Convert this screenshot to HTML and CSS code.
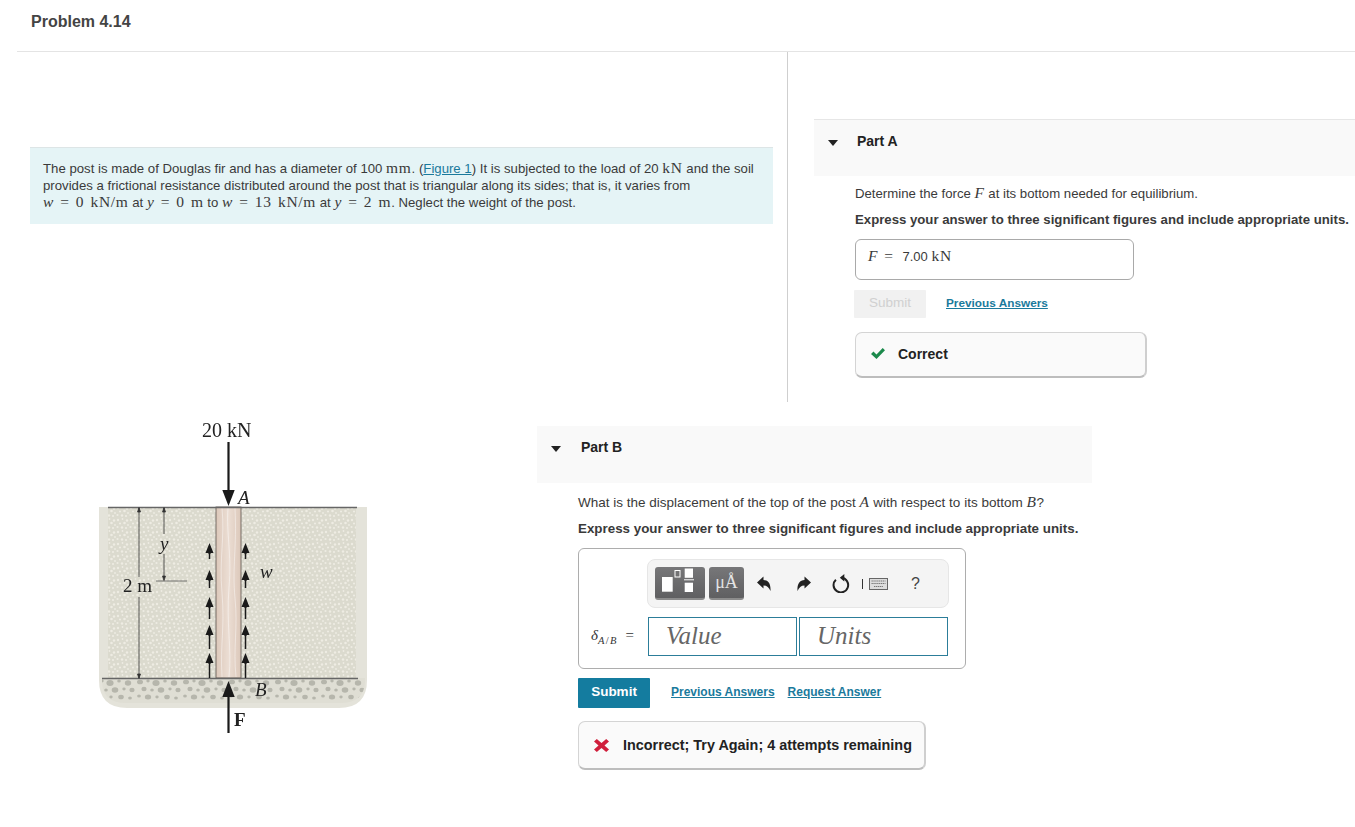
FILE: index.html
```html
<!DOCTYPE html>
<html lang="en">
<head>
<meta charset="utf-8">
<title>Problem 4.14</title>
<link rel="stylesheet" href="styles.css">
</head>
<body>
<header class="title"><h1>Problem 4.14</h1></header>
<section class="top">
  <div class="intro-col">
    <div class="intro">The post is made of Douglas fir and has a diameter of 100 <span class="m">mm</span>. (<a href="#">Figure 1</a>) It is subjected to the load of 20 <span class="m">kN</span> and the soil<br>provides a frictional resistance distributed around the post that is triangular along its sides; that is, it varies from<br><span class="m"><i>w</i> = 0 kN/m</span> at <span class="m"><i>y</i> = 0 m</span> to <span class="m"><i>w</i> = 13 kN/m</span> at <span class="m"><i>y</i> = 2 m</span>. Neglect the weight of the post.</div>
  </div>
  <div class="part part-a">
    <div class="part-head"><span class="caret"></span><h2>Part A</h2></div>
    <div class="part-body">
      <p class="q">Determine the force <span class="m"><i>F</i></span> at its bottom needed for equilibrium.</p>
      <p class="ins">Express your answer to three significant figures and include appropriate units.</p>
      <div class="done-input"><span class="m"><i>F</i> =</span> <span class="val">7.00</span> <span class="m">kN</span></div>
      <div class="actions">
        <button class="submit off">Submit</button>
        <a class="link" href="#">Previous Answers</a>
      </div>
      <div class="feedback ok">
        <svg class="fb-icon" width="16" height="13" viewBox="0 0 16 13"><path d="M1 7l2.500-2.500 3 3L12.700 1 15 3.300 6.500 12z" fill="#1c8a4c"/></svg>
        <span>Correct</span>
      </div>
    </div>
  </div>
</section>
<section class="bottom">
  <svg class="figure" width="290" height="330" viewBox="0 0 290 330">
    <defs>
      <pattern id="sand" width="13" height="12" patternUnits="userSpaceOnUse">
        <rect width="13" height="12" fill="#dbdace"/>
        <g fill="#eeece3">
          <circle cx="2" cy="2" r="1.200"/><circle cx="6.500" cy="1" r=".9"/><circle cx="11" cy="2.500" r="1.200"/>
          <circle cx="4" cy="5.500" r="1.100"/><circle cx="8.500" cy="5" r="1.300"/><circle cx="12" cy="7" r=".9"/>
          <circle cx="1.500" cy="9" r="1.100"/><circle cx="6" cy="9.500" r="1.200"/><circle cx="10" cy="10" r="1.100"/>
        </g>
      </pattern>
      <pattern id="gravel" width="46" height="24" patternUnits="userSpaceOnUse" patternTransform="translate(0 268)">
        <g fill="#b6b6ac">
          <ellipse cx="4" cy="4" rx="3" ry="2.300"/><ellipse cx="12" cy="3" rx="1.700" ry="1.400"/><ellipse cx="20" cy="5" rx="3.600" ry="3"/>
          <ellipse cx="29" cy="3" rx="1.800" ry="1.500"/><ellipse cx="38" cy="5" rx="3.200" ry="2.700"/><ellipse cx="8" cy="11" rx="2.600" ry="2.200"/>
          <ellipse cx="16" cy="12" rx="1.800" ry="1.500"/><ellipse cx="25" cy="12" rx="3.300" ry="2.800"/><ellipse cx="34" cy="11" rx="1.700" ry="1.400"/>
          <ellipse cx="42" cy="12" rx="2.600" ry="2.200"/><ellipse cx="3" cy="18" rx="1.900" ry="1.500"/><ellipse cx="12" cy="19" rx="3.200" ry="2.500"/>
          <ellipse cx="21" cy="19" rx="1.700" ry="1.400"/><ellipse cx="31" cy="19" rx="2.800" ry="2.300"/><ellipse cx="40" cy="20" rx="1.900" ry="1.500"/>
        </g>
      </pattern>
      <linearGradient id="wood" x1="0" x2="1" y1="0" y2="0">
        <stop offset="0" stop-color="#dcc8ba"/><stop offset=".5" stop-color="#ebddd3"/><stop offset="1" stop-color="#dcc8ba"/>
      </linearGradient>
      <g id="up"><path d="M0 0l4 10h-3v1h-2v-1h-3z" fill="#1a1a1a"/></g>
    </defs>
    <g class="art">
      <path d="M9 97H277V270Q277 298 249 298H37Q9 298 9 270Z" fill="#e4e3da"/>
      <rect x="18" y="98" width="248" height="170" fill="url(#sand)"/>
      <path d="M12 268H275V272Q274 293 250 293H36Q13 293 12 272Z" fill="#dfded4"/>
      <path d="M12 269H275V272Q274 293 250 293H36Q13 293 12 272Z" fill="url(#gravel)"/>
      <rect x="126" y="97" width="25" height="171" fill="url(#wood)" stroke="#6a625c" stroke-width=".9"/>
      <g fill="none" stroke="#fff" stroke-opacity=".55" stroke-width=".8">
        <path d="M132 98c3 30-3 50 0 85s-2 50 0 84"/>
        <path d="M138 98c-2 25 4 45 1 80s3 60 0 89"/>
        <path d="M145 98c2 40-3 60 0 90s-2 50 1 79"/>
      </g>
      <path d="M18 97.500H267M12 268.500H268" stroke="#666" stroke-width="1.300"/>
      <g stroke="#333" stroke-width=".8" fill="#333">
        <path d="M49 98V167M49 187V268" fill="none"/>
        <path d="M74 98V124M74 144V168" fill="none"/>
        <path d="M66 171H97" fill="none" stroke="#555"/>
        <path d="M47.500 102L49 97.500 50.500 102Z"/><path d="M47.500 264L49 268.500 50.500 264Z"/>
        <path d="M72.500 102L74 97.500 75.500 102Z"/><path d="M72.500 166L74 170.500 75.500 166Z"/>
      </g>
      <g stroke="#1a1a1a" stroke-width="1.500">
        <path d="M119.500 140V149M119.500 167V178M119.500 194V209M119.500 222V239M119.500 250V268"/>
        <path d="M155.500 140V149M155.500 167V178M155.500 194V209M155.500 222V239M155.500 250V268"/>
      </g>
      <use href="#up" x="119.500" y="133"/><use href="#up" x="119.500" y="160"/><use href="#up" x="119.500" y="187"/><use href="#up" x="119.500" y="215"/><use href="#up" x="119.500" y="243"/>
      <use href="#up" x="155.500" y="133"/><use href="#up" x="155.500" y="160"/><use href="#up" x="155.500" y="187"/><use href="#up" x="155.500" y="215"/><use href="#up" x="155.500" y="243"/>
      <path d="M138.500 32V82" stroke="#1a1a1a" stroke-width="2.200"/>
      <path d="M132.300 80H144.700L138.500 96Z" fill="#1a1a1a"/>
      <path d="M138.500 286V323" stroke="#1a1a1a" stroke-width="2.200"/>
      <path d="M132.300 287H144.700L138.500 271Z" fill="#1a1a1a"/>
    </g>
    <text class="fig-t big" x="112" y="27">20 kN</text>
    <text class="fig-t it" x="148" y="94">A</text>
    <text class="fig-t it" x="165" y="286">B</text>
    <text class="fig-t bold" x="144" y="316">F</text>
    <text class="fig-t it" x="170" y="168">w</text>
    <text class="fig-t it" x="70" y="140">y</text>
    <text class="fig-t" x="33" y="182">2 m</text>
  </svg>
  <div class="part part-b">
    <div class="part-head"><span class="caret"></span><h2>Part B</h2></div>
    <div class="part-body">
      <p class="q">What is the displacement of the top of the post <span class="m"><i>A</i></span> with respect to its bottom <span class="m"><i>B</i></span>?</p>
      <p class="ins">Express your answer to three significant figures and include appropriate units.</p>
      <div class="answer">
        <div class="toolbar">
          <span class="tool tpl">
            <svg width="50" height="33" viewBox="0 0 50 33"><g fill="#fff"><rect x="7" y="11" width="10.700" height="14.700"/><rect x="29.700" y="2.500" width="8.300" height="9.300"/><rect x="29.700" y="16.700" width="8.300" height="9.300"/><rect x="29" y="13.300" width="10" height="1"/></g><rect x="20" y="4.500" width="5" height="6.500" fill="none" stroke="#fff"/></svg>
          </span>
          <span class="tool unit">μÅ</span>
          <svg class="ic undo" width="14" height="15" viewBox="0 0 14 15"><path d="M0 6.500L6.500 .5V4C11 4 14 7.500 13.500 15 12 11.500 10 9.500 6.500 9.500V12.500Z" fill="#222"/></svg>
          <svg class="ic redo" width="14" height="15" viewBox="0 0 14 15"><path d="M14 6.500L7.500 .5V4C3 4 0 7.500 .5 15 2 11.500 4 9.500 7.500 9.500V12.500Z" fill="#222"/></svg>
          <svg class="ic reset" width="18" height="19" viewBox="0 0 18 19"><path d="M3.900 5.700A7.300 7.300 0 1 0 9.500 3.800" fill="none" stroke="#222" stroke-width="2"/><path d="M7.800 3.700L12.300 0V7.400Z" fill="#222"/></svg>
          <span class="pipe"></span>
          <svg class="ic kb" width="19" height="12" viewBox="0 0 19 12"><rect x=".5" y=".5" width="18" height="11" fill="#ddd" stroke="#666"/><path d="M2.500 3H16.500M2.500 5.500H16.500M5 8.500H14" stroke="#777" stroke-width="1.200" stroke-dasharray="1.300 .6"/></svg>
          <span class="help">?</span>
        </div>
        <div class="entry">
          <span class="var"><i>δ</i><sub><i>A</i>/<i>B</i></sub> =</span>
          <span class="box">Value</span>
          <span class="box">Units</span>
        </div>
      </div>
      <div class="actions">
        <button class="submit">Submit</button>
        <a class="link" href="#">Previous Answers</a>
        <a class="link" href="#">Request Answer</a>
      </div>
      <div class="feedback bad">
        <svg class="fb-icon" width="15" height="13" viewBox="0 0 15 13"><path d="M0 2.500L2.800 0 7.500 4 12.200 0 15 2.500 10.500 6.500 15 10.500 12.200 13 7.500 9 2.800 13 0 10.500 4.500 6.500Z" fill="#d01f3c"/></svg>
        <span>Incorrect; Try Again; 4 attempts remaining</span>
      </div>
    </div>
  </div>
</section>
</body>
</html>
```

FILE: styles.css
```css
* { box-sizing: border-box; }
html, body { margin: 0; padding: 0; }
body {
  width: 1355px;
  height: 827px;
  overflow: hidden;
  background: #fff;
  color: #3a3a3a;
  font-family: "Liberation Sans", Arial, sans-serif;
  font-size: 13.2px;
}
a { color: #1a7a9c; }
h1, h2, p { margin: 0; }

.title {
  height: 52px;
  margin-left: 17px;
  padding: 13px 0 0 14px;
  border-bottom: 1px solid #e4e4e4;
}
.title h1 { font-size: 16px; line-height: 18px; font-weight: bold; color: #444; }

.top { display: flex; height: 350px; }
.intro-col {
  width: 771px;
  margin-left: 17px;
  padding: 95px 0 0 13px;
  border-right: 1px solid #cfcfcf;
}
.intro {
  width: 743px;
  height: 77px;
  padding: 12px 0 0 13px;
  line-height: 17px;
  white-space: nowrap;
  background: #e5f4f6;
  border-top: 1px solid #dde5e6;
}
.m { font-family: "Liberation Serif", "Times New Roman", serif; font-size: 15.500px; line-height: 1; letter-spacing: .7px; word-spacing: 1.600px; }

.part-a { width: 541px; margin: 67px 0 0 26px; }
.part-head {
  display: flex;
  align-items: flex-start;
  height: 57px;
  padding: 13px 0 0 14px;
  background: #f9f9f9;
  border-top: 1px solid #e6e6e6;
  color: #222;
}
.part-head h2 { font-size: 14px; line-height: 16px; font-weight: bold; margin-left: 19px; }
.caret {
  width: 0;
  height: 0;
  margin-top: 7px;
  border-left: 5px solid transparent;
  border-right: 5px solid transparent;
  border-top: 6px solid #222;
}
.part-a .part-body { padding: 9px 0 0 41px; }
.q { line-height: 18px; white-space: nowrap; }
.ins { margin-top: 8px; line-height: 18px; font-weight: bold; white-space: nowrap; }

.done-input {
  width: 279px;
  height: 41px;
  margin-top: 10px;
  padding: 8px 0 0 12px;
  border: 1px solid #a9a9a9;
  border-radius: 6px;
  line-height: 18px;
}
.val { margin-left: 5px; font-size: 13px; }
.actions { display: flex; align-items: center; margin-top: 10px; }
.submit {
  width: 72px;
  height: 30px;
  padding: 0 0 3px;
  border: 0;
  border-radius: 1px;
  background: #147c9f;
  color: #fff;
  font: bold 13.500px "Liberation Sans", Arial, sans-serif;
}
.submit.off { height: 28px; background: #f1f1f1; color: #d0d0d0; font-weight: normal; margin-left: -1px; }
.link { margin-left: 20px; padding-bottom: 2px; font-size: 11.800px; font-weight: bold; white-space: nowrap; }
.link + .link { margin-left: 13px; }
.feedback {
  display: flex;
  align-items: center;
  margin-top: 14px;
  border: 1px solid #d4d4d4;
  border-bottom: 2px solid #bdbdbd;
  border-right: 2px solid #cfcfcf;
  border-radius: 7px;
  background: #fafafa;
  color: #222;
  font-size: 14px;
  font-weight: bold;
}
.feedback.ok { width: 292px; height: 46px; padding: 0 0 2px 14px; }
.feedback.ok .fb-icon { margin-right: 12px; }
.feedback.bad { width: 348px; height: 49px; padding: 0 0 0 15px; margin-top: 13px; font-size: 14.400px; }
.feedback.bad .fb-icon { margin-right: 14px; }

.bottom { display: flex; align-items: flex-start; }
.figure { flex: none; margin: 8px 0 0 90px; }
.art { filter: blur(.4px); }
.fig-t { font-family: "Liberation Serif", "Times New Roman", serif; font-size: 19px; fill: #222; }
.fig-t.big { font-size: 20px; }
.fig-t.it { font-style: italic; }
.fig-t.bold { font-weight: bold; }

.part-b { width: 555px; margin: 24px 0 0 157px; }
.part-b .part-head { border-top: 0; padding-top: 13px; }
.part-b h2 { margin-left: 20px; }
.part-b .part-body { padding: 11px 0 0 41px; }
.part-b .q { font-size: 13.500px; }
.part-b .ins { font-size: 13.360px; }
.part-b .link { font-size: 12px; }

.answer {
  width: 388px;
  height: 121px;
  margin-top: 10px;
  padding: 10px 0 0 68px;
  border: 1px solid #adadad;
  border-radius: 6px;
}
.toolbar {
  display: flex;
  align-items: center;
  width: 302px;
  height: 49px;
  padding-left: 7px;
  background: #f4f4f4;
  border: 1px solid #e6e6e6;
  border-radius: 8px;
}
.tool {
  display: flex;
  align-items: center;
  justify-content: center;
  height: 33px;
  border-radius: 3px;
  border-bottom: 2px solid #8c8c8c;
  background: linear-gradient(#777779, #5f5f61);
  color: #e4e4e4;
}
.tpl { width: 50px; }
.unit { width: 35px; margin-left: 4px; font-family: "Liberation Serif", serif; font-size: 18px; }
.ic { flex: none; }
.undo { margin-left: 13px; }
.redo { margin-left: 26px; }
.reset { margin-left: 21px; }
.pipe { width: 1px; height: 10px; margin-left: 12px; background: #333; }
.kb { margin-left: 6px; }
.help { margin-left: 23px; font-size: 16px; color: #444; }

.entry { display: flex; align-items: center; margin: 9px 0 0 -68px; }
.var { width: 69px; padding-left: 12px; font-family: "Liberation Serif", serif; font-size: 15px; word-spacing: 4px; color: #333; white-space: nowrap; }
.var sub { font-size: 10.500px; letter-spacing: 1.300px; }
.box {
  width: 149px;
  height: 39px;
  padding-left: 17px;
  margin-right: 2px;
  border: 1px solid #2c7d99;
  font-family: "Liberation Serif", serif;
  font-size: 25px;
  font-style: italic;
  line-height: 36px;
  color: #666;
}
.part-b .actions { margin-top: 9px; }
.part-b .link:first-of-type { margin-left: 21px; }
```
